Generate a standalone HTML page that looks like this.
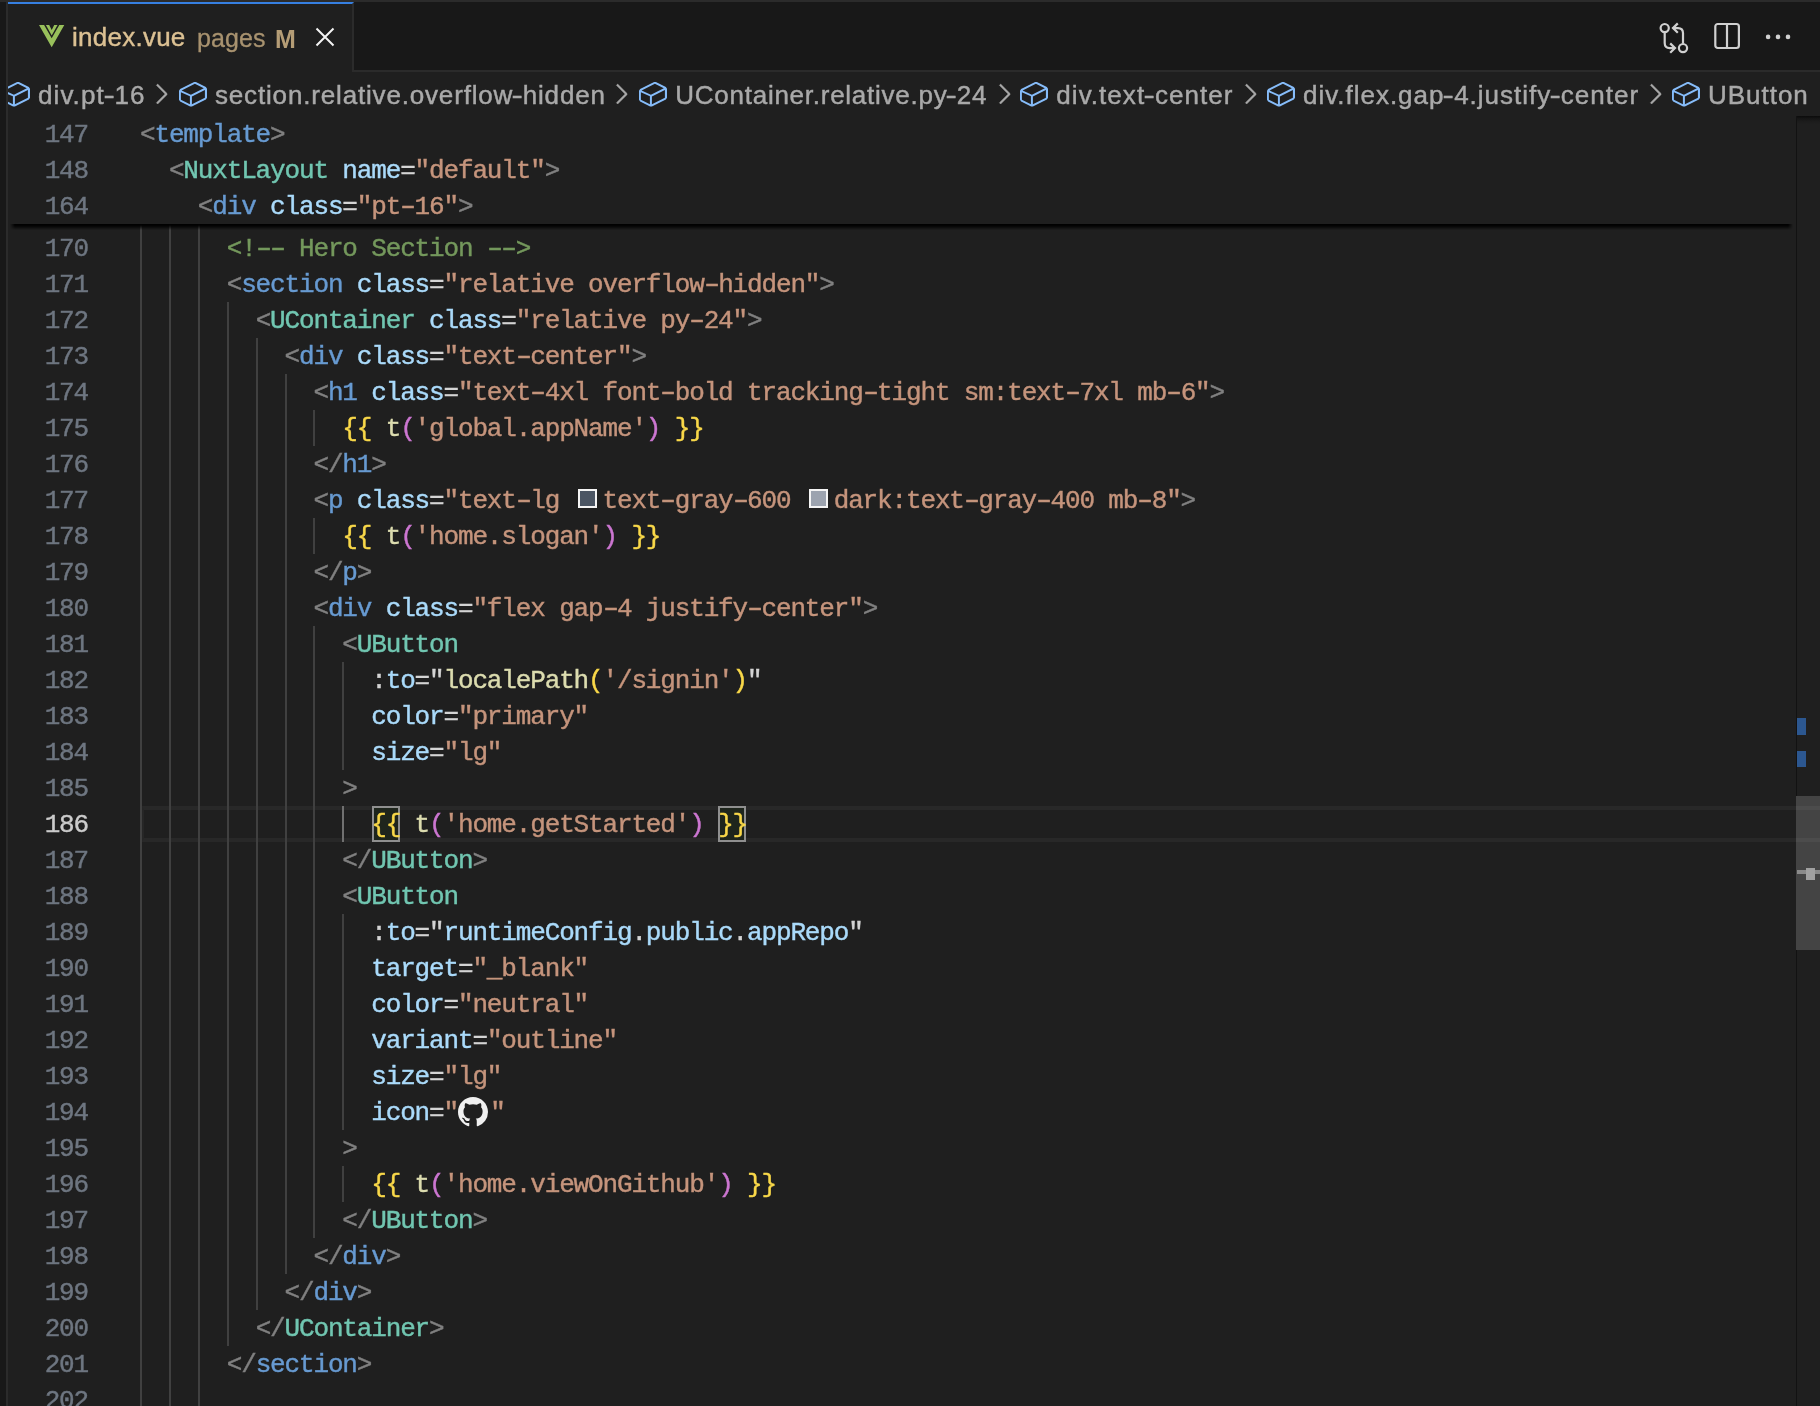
<!DOCTYPE html>
<html><head><meta charset="utf-8"><title>index.vue</title>
<style>
html,body{margin:0;padding:0}
body{width:1820px;height:1406px;background:#1f1f1f;overflow:hidden;position:relative;font-family:"Liberation Sans",sans-serif}
div,span{box-sizing:border-box}
#topline{position:absolute;left:0;top:0;width:1820px;height:2px;background:#2b2b2b}
#tabbar{position:absolute;left:0;top:2px;width:1820px;height:70px;background:#181818;border-bottom:2px solid #2b2b2b}
#lstrip{position:absolute;left:0;top:2px;width:8px;height:1404px;background:#181818;border-right:2px solid #2b2b2b;z-index:20}
#tab{position:absolute;left:8px;top:2px;width:346px;height:70px;background:#1f1f1f;border-top:2px solid #367fe0;border-right:2px solid #2b2b2b}
#tab .nm{-webkit-text-stroke:0.4px;letter-spacing:0.25px;position:absolute;left:64px;top:17px;font-size:26px;line-height:32px;color:#dcc193;white-space:pre}
#tab .ds{-webkit-text-stroke:0.3px;position:absolute;left:189px;top:18px;font-size:25px;letter-spacing:0.1px;line-height:32px;color:#a8926f;white-space:pre}
#tab .bd{position:absolute;left:267px;top:19px;font-size:25px;line-height:32px;color:#b59d76;white-space:pre;font-weight:bold}
.abs{position:absolute}
#bc{-webkit-text-stroke:0.45px;position:absolute;left:8px;top:72px;width:1812px;height:44px;overflow:hidden;background:#1f1f1f;color:#a9a9a9;font-size:26px;line-height:44px;white-space:pre}
#bc span{position:absolute;top:1px}
#bc svg{position:absolute}
#bc i{display:inline-block;font-style:normal;transform:scaleX(1.3)}
/* code */
#sticky{position:absolute;left:8px;top:116px;width:1788px;height:108px;background:#1f1f1f;z-index:5;}
#shadow{z-index:4;-webkit-mask-image:linear-gradient(to right,transparent 0,#000 5px,#000 1778px,transparent 1783px);position:absolute;left:10px;top:224px;width:1783px;height:6px;z-index:4;border-radius:0 0 3px 3px;background:linear-gradient(to bottom,rgba(0,0,0,1) 0,rgba(0,0,0,.9) 25%,rgba(0,0,0,.65) 50%,rgba(0,0,0,.3) 75%,rgba(0,0,0,0) 100%)}
#main{position:absolute;left:0;top:0;width:1796px;height:1406px;overflow:hidden}
.ln,.cl{position:absolute;height:38px;line-height:38px;font-family:"Liberation Mono",monospace;font-size:26px;letter-spacing:-1.15px;white-space:pre;-webkit-text-stroke:0.42px}
#main .ln{left:0;width:88px;text-align:right;color:#6e7681}
#main .cl{left:140px;color:#d4d4d4}
#sticky .ln{left:-8px;width:88px;text-align:right;color:#6e7681}
#sticky .cl{left:132px;color:#d4d4d4}
.ln.act{color:#cccccc !important}
.p{color:#808080}.t{color:#679ad1}.c{color:#71c6b1}.a{color:#aadafa}.e{color:#d4d4d4}.s{color:#c5947c}.k{color:#74985c}
.y{color:#f9d849}.m{color:#cc76d1}.f{color:#dcdcaf}
.h{display:inline-block;transform:scaleX(1.55)}
.g{position:absolute;width:2px;background:#404040}
.g.ga{background:#707070}
#curline{position:absolute;left:142px;width:1678px;height:36px;border-top:4px solid #282828;border-bottom:4px solid #282828;border-left:2px solid #262626}
.bxb{position:absolute;width:28px;height:36px;border:2px solid #8f8f8f;background:#1e251c}
.sw{display:inline-block;width:19px;height:19px;border:2px solid #f4f4f4;margin:0 5.9px 0 4px;vertical-align:0px}
.gh{display:inline-block;width:32.4px;height:30px;vertical-align:-7px;position:relative}
.gh svg{position:absolute;left:0;top:0}
/* scrollbar */
#ruler{position:absolute;left:1796px;top:116px;width:24px;height:1290px;border-left:1px solid #121212;background:#1f1f1f;z-index:6}
#wrap{position:absolute;left:0;top:0;width:1820px;height:1406px;will-change:transform}
</style></head><body><div id="wrap">

<div id="topline"></div>
<div id="tabbar"></div>
<div id="tab">
<svg class="abs" style="left:30.8px;top:21px" width="26" height="23" viewBox="0 0 26 23"><path fill="#98c05b" d="M0 0h5.1l7.6 13.3L20.3 0h5L12.7 22.3z"/><path fill="#98c05b" d="M6.9 0h3.3l2.5 5 2.5-5h3.3l-5.8 10.5z"/></svg>
<span class="nm">index.vue</span><span class="ds">pages</span><span class="bd">M</span>
<svg class="abs" style="left:305.5px;top:22px" width="22" height="22" viewBox="0 0 22 22"><path d="M2.5 2.5l17 17M19.5 2.5l-17 17" stroke="#f4f4f4" stroke-width="2" fill="none"/></svg>
</div>
<div id="lstrip"></div>

<div id="bc">
<svg style="left:-8.3px;top:6px" width="32" height="32" viewBox="0 0 16 16"><path fill="#86bcf9" d="M14.45 4.5l-5-2.5h-.9l-7 3.5-.55.89v4.5l.55.9 5 2.5h.9l7-3.5.55-.9v-4.5l-.55-.89zm-8 8.64l-4.5-2.25V7.17l4.5 2v3.97zm.5-4.8L2.29 6.23l6.66-3.34 4.45 2.23-6.45 3.22zm7 1.55l-6.5 3.25V9.21l6.5-3.25v3.93z"/></svg>
<span id="bt0" style="left:30px;letter-spacing:1.09px">div.pt<i>-</i>16</span>
<svg style="left:136.6px;top:6px" width="32" height="32" viewBox="0 0 16 16"><path fill="#a9a9a9" stroke="#a9a9a9" stroke-width="0.25" d="M10.072 8.024L5.715 3.667l.618-.62L11 7.716v.618L6.333 13l-.618-.619 4.357-4.357z"/></svg>
<svg style="left:168.7px;top:6px" width="32" height="32" viewBox="0 0 16 16"><path fill="#86bcf9" d="M14.45 4.5l-5-2.5h-.9l-7 3.5-.55.89v4.5l.55.9 5 2.5h.9l7-3.5.55-.9v-4.5l-.55-.89zm-8 8.64l-4.5-2.25V7.17l4.5 2v3.97zm.5-4.8L2.29 6.23l6.66-3.34 4.45 2.23-6.45 3.22zm7 1.55l-6.5 3.25V9.21l6.5-3.25v3.93z"/></svg>
<span id="bt1" style="left:207px;letter-spacing:0.83px">section.relative.overflow<i>-</i>hidden</span>
<svg style="left:596.7px;top:6px" width="32" height="32" viewBox="0 0 16 16"><path fill="#a9a9a9" stroke="#a9a9a9" stroke-width="0.25" d="M10.072 8.024L5.715 3.667l.618-.62L11 7.716v.618L6.333 13l-.618-.619 4.357-4.357z"/></svg>
<svg style="left:628.7px;top:6px" width="32" height="32" viewBox="0 0 16 16"><path fill="#86bcf9" d="M14.45 4.5l-5-2.5h-.9l-7 3.5-.55.89v4.5l.55.9 5 2.5h.9l7-3.5.55-.9v-4.5l-.55-.89zm-8 8.64l-4.5-2.25V7.17l4.5 2v3.97zm.5-4.8L2.29 6.23l6.66-3.34 4.45 2.23-6.45 3.22zm7 1.55l-6.5 3.25V9.21l6.5-3.25v3.93z"/></svg>
<span id="bt2" style="left:667.3px;letter-spacing:0.74px">UContainer.relative.py<i>-</i>24</span>
<svg style="left:979.6px;top:6px" width="32" height="32" viewBox="0 0 16 16"><path fill="#a9a9a9" stroke="#a9a9a9" stroke-width="0.25" d="M10.072 8.024L5.715 3.667l.618-.62L11 7.716v.618L6.333 13l-.618-.619 4.357-4.357z"/></svg>
<svg style="left:1010px;top:6px" width="32" height="32" viewBox="0 0 16 16"><path fill="#86bcf9" d="M14.45 4.5l-5-2.5h-.9l-7 3.5-.55.89v4.5l.55.9 5 2.5h.9l7-3.5.55-.9v-4.5l-.55-.89zm-8 8.64l-4.5-2.25V7.17l4.5 2v3.97zm.5-4.8L2.29 6.23l6.66-3.34 4.45 2.23-6.45 3.22zm7 1.55l-6.5 3.25V9.21l6.5-3.25v3.93z"/></svg>
<span id="bt3" style="left:1048.3px;letter-spacing:1.06px">div.text<i>-</i>center</span>
<svg style="left:1225.5px;top:6px" width="32" height="32" viewBox="0 0 16 16"><path fill="#a9a9a9" stroke="#a9a9a9" stroke-width="0.25" d="M10.072 8.024L5.715 3.667l.618-.62L11 7.716v.618L6.333 13l-.618-.619 4.357-4.357z"/></svg>
<svg style="left:1257px;top:6px" width="32" height="32" viewBox="0 0 16 16"><path fill="#86bcf9" d="M14.45 4.5l-5-2.5h-.9l-7 3.5-.55.89v4.5l.55.9 5 2.5h.9l7-3.5.55-.9v-4.5l-.55-.89zm-8 8.64l-4.5-2.25V7.17l4.5 2v3.97zm.5-4.8L2.29 6.23l6.66-3.34 4.45 2.23-6.45 3.22zm7 1.55l-6.5 3.25V9.21l6.5-3.25v3.93z"/></svg>
<span id="bt4" style="left:1295px;letter-spacing:0.99px">div.flex.gap<i>-</i>4.justify<i>-</i>center</span>
<svg style="left:1631.0px;top:6px" width="32" height="32" viewBox="0 0 16 16"><path fill="#a9a9a9" stroke="#a9a9a9" stroke-width="0.25" d="M10.072 8.024L5.715 3.667l.618-.62L11 7.716v.618L6.333 13l-.618-.619 4.357-4.357z"/></svg>
<svg style="left:1661.9px;top:6px" width="32" height="32" viewBox="0 0 16 16"><path fill="#86bcf9" d="M14.45 4.5l-5-2.5h-.9l-7 3.5-.55.89v4.5l.55.9 5 2.5h.9l7-3.5.55-.9v-4.5l-.55-.89zm-8 8.64l-4.5-2.25V7.17l4.5 2v3.97zm.5-4.8L2.29 6.23l6.66-3.34 4.45 2.23-6.45 3.22zm7 1.55l-6.5 3.25V9.21l6.5-3.25v3.93z"/></svg>
<span id="bt5" style="left:1700.0px;letter-spacing:0.98px">UButton</span>
</div>
<div id="sticky">
<div class="ln" style="top:0px">147</div><div class="cl" style="top:0px"><span class="p">&lt;</span><span class="t">template</span><span class="p">&gt;</span></div>
<div class="ln" style="top:36px">148</div><div class="cl" style="top:36px">  <span class="p">&lt;</span><span class="c">NuxtLayout</span> <span class="a">name</span><span class="e">=</span><span class="s">"default"</span><span class="p">&gt;</span></div>
<div class="ln" style="top:72px">164</div><div class="cl" style="top:72px">    <span class="p">&lt;</span><span class="t">div</span> <span class="a">class</span><span class="e">=</span><span class="s">"pt<span class="h">-</span>16"</span><span class="p">&gt;</span></div>
</div>
<div id="shadow"></div>
<div id="main">
<div id="curline" style="top:806px"></div>
<div class="bxb" style="left:372px;top:806px"></div><div class="bxb" style="left:718px;top:806px"></div>
<div class="g" style="left:140px;top:194px;height:1224px"></div>
<div class="g" style="left:169px;top:194px;height:1224px"></div>
<div class="g" style="left:198px;top:194px;height:1224px"></div>
<div class="g" style="left:227px;top:302px;height:1044px"></div>
<div class="g" style="left:256px;top:338px;height:972px"></div>
<div class="g" style="left:285px;top:374px;height:900px"></div>
<div class="g" style="left:313px;top:410px;height:36px"></div>
<div class="g" style="left:313px;top:518px;height:36px"></div>
<div class="g" style="left:313px;top:626px;height:612px"></div>
<div class="g" style="left:342px;top:662px;height:108px"></div>
<div class="g" style="left:342px;top:806px;height:36px"></div>
<div class="g" style="left:342px;top:914px;height:216px"></div>
<div class="g" style="left:342px;top:1166px;height:36px"></div>
<div class="g ga" style="left:342px;top:806px;height:36px"></div>
<div class="ln" style="top:230px">170</div><div class="cl" style="top:230px">      <span class="k">&lt;!<span class="h">-</span><span class="h">-</span> Hero Section <span class="h">-</span><span class="h">-</span>&gt;</span></div>
<div class="ln" style="top:266px">171</div><div class="cl" style="top:266px">      <span class="p">&lt;</span><span class="t">section</span> <span class="a">class</span><span class="e">=</span><span class="s">"relative overflow<span class="h">-</span>hidden"</span><span class="p">&gt;</span></div>
<div class="ln" style="top:302px">172</div><div class="cl" style="top:302px">        <span class="p">&lt;</span><span class="c">UContainer</span> <span class="a">class</span><span class="e">=</span><span class="s">"relative py<span class="h">-</span>24"</span><span class="p">&gt;</span></div>
<div class="ln" style="top:338px">173</div><div class="cl" style="top:338px">          <span class="p">&lt;</span><span class="t">div</span> <span class="a">class</span><span class="e">=</span><span class="s">"text<span class="h">-</span>center"</span><span class="p">&gt;</span></div>
<div class="ln" style="top:374px">174</div><div class="cl" style="top:374px">            <span class="p">&lt;</span><span class="t">h1</span> <span class="a">class</span><span class="e">=</span><span class="s">"text<span class="h">-</span>4xl font<span class="h">-</span>bold tracking<span class="h">-</span>tight sm:text<span class="h">-</span>7xl mb<span class="h">-</span>6"</span><span class="p">&gt;</span></div>
<div class="ln" style="top:410px">175</div><div class="cl" style="top:410px">              <span class="y">{{</span> <span class="f">t</span><span class="m">(</span><span class="s">'global.appName'</span><span class="m">)</span> <span class="y">}}</span></div>
<div class="ln" style="top:446px">176</div><div class="cl" style="top:446px">            <span class="p">&lt;/</span><span class="t">h1</span><span class="p">&gt;</span></div>
<div class="ln" style="top:482px">177</div><div class="cl" style="top:482px">            <span class="p">&lt;</span><span class="t">p</span> <span class="a">class</span><span class="e">=</span><span class="s">"text<span class="h">-</span>lg </span><span class="sw" style="background:#4b5563"></span><span class="s">text<span class="h">-</span>gray<span class="h">-</span>600 </span><span class="sw" style="background:#9ca3af"></span><span class="s">dark:text<span class="h">-</span>gray<span class="h">-</span>400 mb<span class="h">-</span>8"</span><span class="p">&gt;</span></div>
<div class="ln" style="top:518px">178</div><div class="cl" style="top:518px">              <span class="y">{{</span> <span class="f">t</span><span class="m">(</span><span class="s">'home.slogan'</span><span class="m">)</span> <span class="y">}}</span></div>
<div class="ln" style="top:554px">179</div><div class="cl" style="top:554px">            <span class="p">&lt;/</span><span class="t">p</span><span class="p">&gt;</span></div>
<div class="ln" style="top:590px">180</div><div class="cl" style="top:590px">            <span class="p">&lt;</span><span class="t">div</span> <span class="a">class</span><span class="e">=</span><span class="s">"flex gap<span class="h">-</span>4 justify<span class="h">-</span>center"</span><span class="p">&gt;</span></div>
<div class="ln" style="top:626px">181</div><div class="cl" style="top:626px">              <span class="p">&lt;</span><span class="c">UButton</span></div>
<div class="ln" style="top:662px">182</div><div class="cl" style="top:662px">                <span class="e">:</span><span class="a">to</span><span class="e">="</span><span class="f">localePath</span><span class="y">(</span><span class="s">'/signin'</span><span class="y">)</span><span class="e">"</span></div>
<div class="ln" style="top:698px">183</div><div class="cl" style="top:698px">                <span class="a">color</span><span class="e">=</span><span class="s">"primary"</span></div>
<div class="ln" style="top:734px">184</div><div class="cl" style="top:734px">                <span class="a">size</span><span class="e">=</span><span class="s">"lg"</span></div>
<div class="ln" style="top:770px">185</div><div class="cl" style="top:770px">              <span class="p">&gt;</span></div>
<div class="ln act" style="top:806px">186</div><div class="cl" style="top:806px">                <span class="y">{{</span> <span class="f">t</span><span class="m">(</span><span class="s">'home.getStarted'</span><span class="m">)</span> <span class="y">}}</span></div>
<div class="ln" style="top:842px">187</div><div class="cl" style="top:842px">              <span class="p">&lt;/</span><span class="c">UButton</span><span class="p">&gt;</span></div>
<div class="ln" style="top:878px">188</div><div class="cl" style="top:878px">              <span class="p">&lt;</span><span class="c">UButton</span></div>
<div class="ln" style="top:914px">189</div><div class="cl" style="top:914px">                <span class="e">:</span><span class="a">to</span><span class="e">="</span><span class="a">runtimeConfig</span><span class="e">.</span><span class="a">public</span><span class="e">.</span><span class="a">appRepo</span><span class="e">"</span></div>
<div class="ln" style="top:950px">190</div><div class="cl" style="top:950px">                <span class="a">target</span><span class="e">=</span><span class="s">"_blank"</span></div>
<div class="ln" style="top:986px">191</div><div class="cl" style="top:986px">                <span class="a">color</span><span class="e">=</span><span class="s">"neutral"</span></div>
<div class="ln" style="top:1022px">192</div><div class="cl" style="top:1022px">                <span class="a">variant</span><span class="e">=</span><span class="s">"outline"</span></div>
<div class="ln" style="top:1058px">193</div><div class="cl" style="top:1058px">                <span class="a">size</span><span class="e">=</span><span class="s">"lg"</span></div>
<div class="ln" style="top:1094px">194</div><div class="cl" style="top:1094px">                <span class="a">icon</span><span class="e">=</span><span class="s">"</span><span class="gh"><svg viewBox="0 0 16 16" width="30" height="30"><path fill="#f0f0f0" d="M8 0C3.58 0 0 3.58 0 8c0 3.54 2.29 6.53 5.47 7.59.4.07.55-.17.55-.38 0-.19-.01-.82-.01-1.49-2.01.37-2.53-.49-2.69-.94-.09-.23-.48-.94-.82-1.13-.28-.15-.68-.52-.01-.53.63-.01 1.08.58 1.23.82.72 1.21 1.87.87 2.33.66.07-.52.28-.87.51-1.07-1.78-.2-3.64-.89-3.64-3.95 0-.87.31-1.59.82-2.15-.08-.2-.36-1.02.08-2.12 0 0 .67-.21 2.2.82.64-.18 1.32-.27 2-.27s1.36.09 2 .27c1.53-1.04 2.2-.82 2.2-.82.44 1.1.16 1.92.08 2.12.51.56.82 1.27.82 2.15 0 3.07-1.87 3.75-3.65 3.95.29.25.54.73.54 1.48 0 1.07-.01 1.93-.01 2.2 0 .21.15.46.55.38A8.01 8.01 0 0 0 16 8c0-4.42-3.58-8-8-8Z"/></svg></span><span class="s">"</span></div>
<div class="ln" style="top:1130px">195</div><div class="cl" style="top:1130px">              <span class="p">&gt;</span></div>
<div class="ln" style="top:1166px">196</div><div class="cl" style="top:1166px">                <span class="y">{{</span> <span class="f">t</span><span class="m">(</span><span class="s">'home.viewOnGithub'</span><span class="m">)</span> <span class="y">}}</span></div>
<div class="ln" style="top:1202px">197</div><div class="cl" style="top:1202px">              <span class="p">&lt;/</span><span class="c">UButton</span><span class="p">&gt;</span></div>
<div class="ln" style="top:1238px">198</div><div class="cl" style="top:1238px">            <span class="p">&lt;/</span><span class="t">div</span><span class="p">&gt;</span></div>
<div class="ln" style="top:1274px">199</div><div class="cl" style="top:1274px">          <span class="p">&lt;/</span><span class="t">div</span><span class="p">&gt;</span></div>
<div class="ln" style="top:1310px">200</div><div class="cl" style="top:1310px">        <span class="p">&lt;/</span><span class="c">UContainer</span><span class="p">&gt;</span></div>
<div class="ln" style="top:1346px">201</div><div class="cl" style="top:1346px">      <span class="p">&lt;/</span><span class="t">section</span><span class="p">&gt;</span></div>
<div class="ln" style="top:1382px">202</div><div class="cl" style="top:1382px">      </div>
</div>
<div id="icons">
<svg class="abs" style="left:1656px;top:18px" width="36" height="40" viewBox="0 0 36 40" fill="none" stroke="#d0d0d0" stroke-width="2.2">
<circle cx="8.7" cy="10.1" r="4.1"/><circle cx="27" cy="30.1" r="4.1"/>
<path d="M8.7 14.5v10.6q0 5 5 5h4.6"/><path d="M14.2 25.4l4.8 4.7-4.8 4.7"/>
<path d="M27 25.8v-10.7q0-5-5-5h-5.2"/><path d="M21.8 5.4l-4.8 4.7 4.8 4.7"/>
</svg>
<svg class="abs" style="left:1712px;top:21px" width="30" height="30" viewBox="0 0 30 30" fill="none" stroke="#d0d0d0" stroke-width="2.2">
<rect x="3.3" y="3" width="23.6" height="24" rx="2.5"/><path d="M15 3v24"/></svg>
<svg class="abs" style="left:1762px;top:30px" width="32" height="14" viewBox="0 0 32 14"><g fill="#d0d0d0"><circle cx="6.1" cy="6.9" r="2.3"/><circle cx="16" cy="6.9" r="2.3"/><circle cx="26" cy="6.9" r="2.3"/></g></svg>
</div>
<div id="ruler">
<div class="abs" style="left:0;top:0;width:23px;height:8px;background:linear-gradient(#0b0b0b,#151515 30%,#1b1b1b 62%,#1f1f1f)"></div>
<div class="abs" style="left:0;top:602px;width:9px;height:17px;background:#2c5790"></div>
<div class="abs" style="left:0;top:635px;width:9px;height:16px;background:#2c5790"></div>
<div class="abs" style="left:-1px;top:680px;width:24px;height:154px;background:#444444"></div>
<div class="abs" style="left:-1px;top:690px;width:24px;height:4px;background:#4c4c4c"></div>
<div class="abs" style="left:-1px;top:722px;width:24px;height:4px;background:#4c4c4c"></div>
<div class="abs" style="left:0;top:754px;width:23px;height:4px;background:#8a8a8a"></div>
<div class="abs" style="left:9px;top:752px;width:9px;height:12px;background:#a0a0a0"></div>
</div>
</div></body></html>
